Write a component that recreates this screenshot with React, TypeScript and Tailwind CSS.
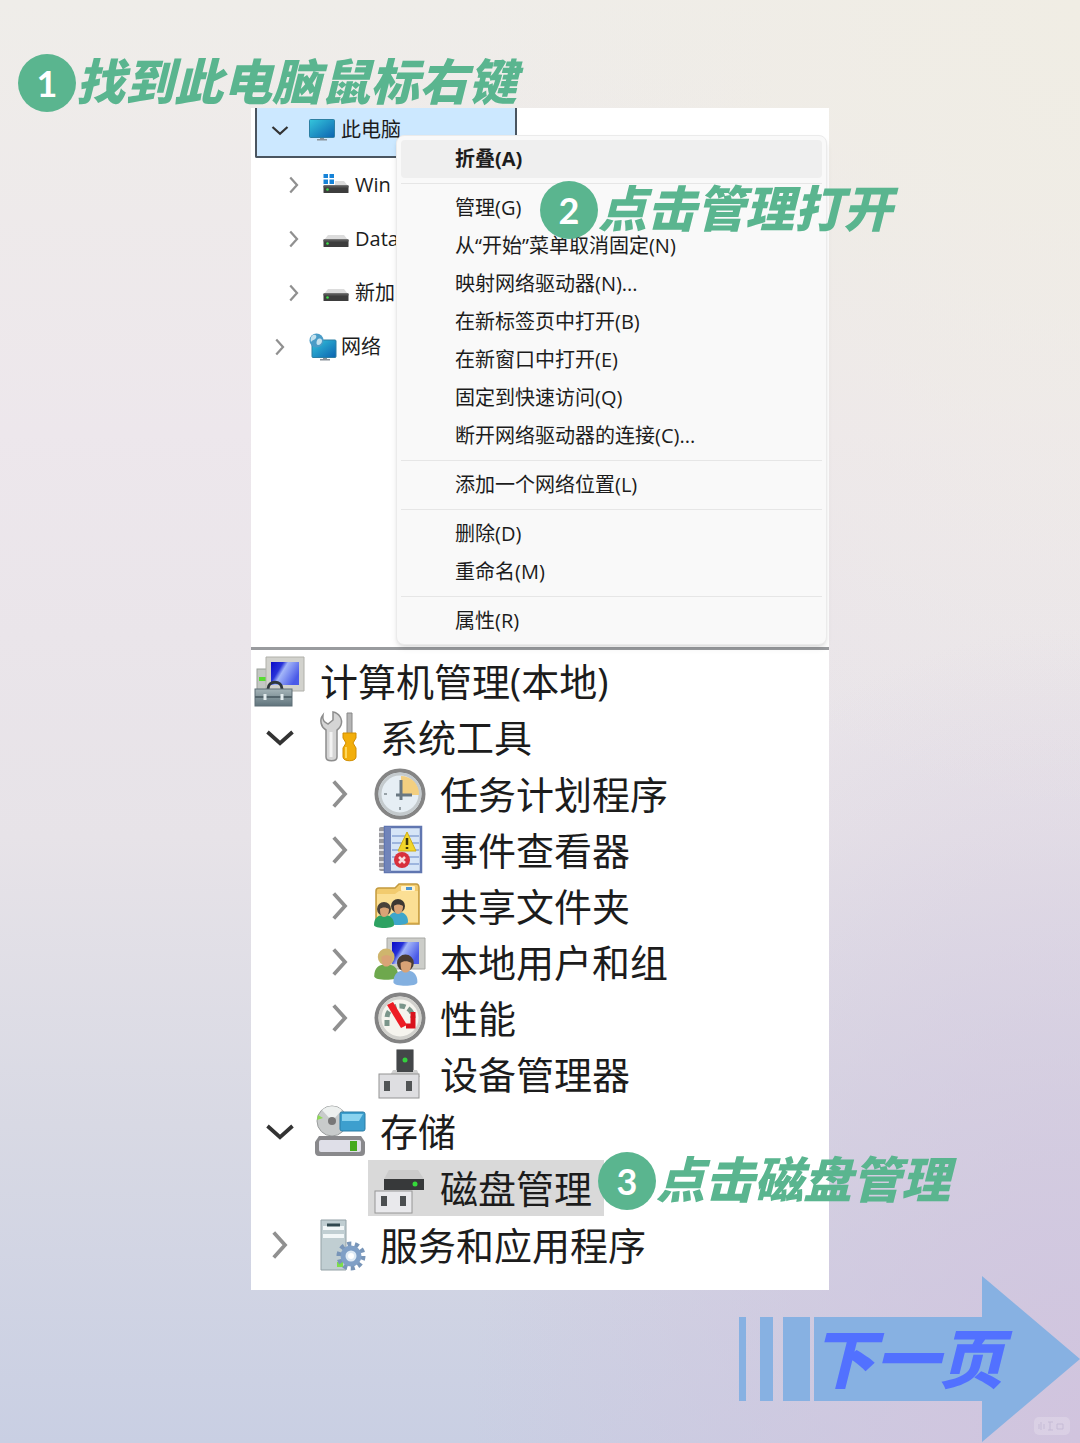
import type { ReactNode } from 'react';
import clsx from 'clsx';

type Item = {
  label: string;
  icon: ReactNode;
  open?: boolean;
  leaf?: boolean;
  selected?: boolean;
  step?: ReactNode;
  children?: Item[];
};

function Chevron({ open, size, stroke }: { open?: boolean; size: number; stroke: number }) {
  return (
    <svg width={size} height={size} viewBox="0 0 24 24" fill="none" strokeWidth={stroke}>
      {open ? (
        <path d="M2 8l10 9 10-9" stroke="#333" />
      ) : (
        <path d="M7 2l9 10-9 10" stroke="#909090" />
      )}
    </svg>
  );
}

function Step({ n, children }: { n: number; children: ReactNode }) {
  return (
    <span className="flex items-center whitespace-nowrap text-[#5ab58f]">
      <span className="flex h-[58px] w-[58px] shrink-0 items-center justify-center rounded-full bg-[#5ab58f] font-['Lato','Open_Sans',sans-serif] text-[36px] leading-[36px] font-bold text-white">
        {n}
      </span>
      <span className="pb-2 font-['Noto_Sans_CJK_SC',sans-serif] text-[49px] leading-[50px] font-black italic">
        {children}
      </span>
    </span>
  );
}

/* ---------- explorer icons ---------- */

function MonitorIcon() {
  return (
    <svg width="26" height="22" viewBox="0 0 26 22">
      <defs>
        <linearGradient id="screen" x1="0" y1="0" x2="1" y2="1">
          <stop offset="0" stopColor="#35c6dc" />
          <stop offset="1" stopColor="#0b62b0" />
        </linearGradient>
      </defs>
      <path d="M11 18h4v2h3v1.500H8V20h3z" fill="#8a9299" />
      <rect x="0.500" y="0.500" width="25" height="18" rx="1" fill="url(#screen)" stroke="#2c7fa3" />
    </svg>
  );
}

function DriveIcon({ windows }: { windows?: boolean }) {
  return (
    <svg width="26" height="22" viewBox="0 0 26 22">
      <path d="M5 7h16l4 5H1z" fill="#dcdcdc" />
      <rect x="0.500" y="11.500" width="25" height="7.500" rx="0.500" fill="#3d3d3d" />
      <rect x="0.500" y="11.500" width="25" height="2" fill="#575757" />
      <circle cx="4.500" cy="15.500" r="1.300" fill="#3fe04a" />
      {windows && (
        <g transform="translate(0 -1)">
          <rect width="12" height="12" fill="#fff" />
          <path d="M0.500 0.500h4.500v4.500h-4.500zM6.500 0.500h4.500v4.500h-4.500zM0.500 6.500h4.500v4.500h-4.500zM6.500 6.500h4.500v4.500h-4.500z" fill="#1683d8" />
        </g>
      )}
    </svg>
  );
}

function NetworkIcon() {
  return (
    <svg width="28" height="28" viewBox="0 0 28 28">
      <path d="M14 24h4v2h3v1.500H11V26h3z" fill="#8a9299" />
      <rect x="3" y="7" width="24" height="17.500" rx="1" fill="url(#screen)" stroke="#2c7fa3" />
      <circle cx="7.500" cy="7.500" r="7" fill="#4a9cc7" />
      <path d="M4 2c3-1 4 1 3 3s-4 2-5 4c-1-3 0-6 2-7zM9 6c3-1 4 0 4 2s-2 4-4 4-2-4 0-6z" fill="#c4e2ee" />
    </svg>
  );
}

/* ---------- computer management icons ---------- */

function ManagementIcon() {
  return (
    <svg width="52" height="52" viewBox="0 0 52 52">
      <defs>
        <linearGradient id="blue" x1="0" y1="0" x2="1" y2="0.500">
          <stop offset="0" stopColor="#0a0ac8" />
          <stop offset="0.350" stopColor="#2732d8" />
          <stop offset="0.500" stopColor="#a3b6f8" />
          <stop offset="1" stopColor="#4a5ae8" />
        </linearGradient>
        <linearGradient id="steel" x1="0" y1="0" x2="0" y2="1">
          <stop offset="0" stopColor="#a5b4b8" />
          <stop offset="1" stopColor="#60747c" />
        </linearGradient>
      </defs>
      <rect x="3" y="14" width="12" height="22" fill="#c3c7c3" stroke="#9aa09a" />
      <rect x="5" y="22" width="8" height="4" fill="#58dc32" />
      <path d="M12 2h38v34H12z" fill="#d2d2cd" stroke="#b0b0aa" />
      <rect x="17" y="7" width="28" height="23" fill="url(#blue)" />
      <path d="M14 34c0-9 14-9 14 0" fill="none" stroke="#2f373b" strokeWidth="3" />
      <rect x="1" y="34" width="37" height="17" fill="url(#steel)" stroke="#5e6f76" />
      <path d="M1 42h37" stroke="#54656c" strokeWidth="2" />
      <path d="M11 39v6M28 39v6" stroke="#e3ecee" strokeWidth="3" />
    </svg>
  );
}

function ToolsIcon() {
  return (
    <svg width="52" height="52" viewBox="0 0 52 52">
      <path d="M9 4c-1 6 2 7 5 9l5-4V1c6 1 10 7 8 13-1 3-3 4-4 5v27c0 5-11 5-11 0V19C7 16 5 9 9 4z" fill="#d5d5d5" stroke="#8d8d8d" strokeWidth="1.500" />
      <path d="M17 21v25" stroke="#f3f3f3" strokeWidth="3" />
      <path d="M33 2h5v21h-5z" fill="#b5b5b5" stroke="#888" />
      <path d="M29 22h13v5l-3 5 3 5v9c0 5-13 5-13 0v-9l3-5-3-5z" fill="#f2ae0b" stroke="#d08d00" />
      <path d="M32 36v11" stroke="#ffd75a" strokeWidth="2" />
    </svg>
  );
}

function ClockIcon() {
  return (
    <svg width="52" height="52" viewBox="0 0 52 52">
      <circle cx="26" cy="26" r="23.500" fill="#e6eef4" stroke="#858585" strokeWidth="4" />
      <circle cx="26" cy="26" r="20" fill="none" stroke="#c4cacd" strokeWidth="3" />
      <path d="M27 27V8a18 18 0 0 1 18 19z" fill="#f3cf80" />
      <path d="M27 12v15h11M27 27v5M22 27h5" fill="none" stroke="#6a7882" strokeWidth="3" />
      <path d="M26 42v-3M10 26h3" stroke="#98a2a8" strokeWidth="2" />
    </svg>
  );
}

function EventIcon() {
  return (
    <svg width="52" height="52" viewBox="0 0 52 52">
      <rect x="5" y="3" width="9" height="44" rx="2" fill="#9a9a9f" />
      <path d="M5 8h8M5 14h8M5 20h8M5 26h8M5 32h8M5 38h8M5 44h8" stroke="#dedee2" strokeWidth="2" />
      <rect x="11" y="3" width="36" height="45" fill="#d6e5f7" stroke="#6076b0" strokeWidth="2.500" />
      <rect x="11" y="3" width="6" height="45" fill="#7184ba" />
      <path d="M18 12h27M18 19h27M18 26h27M18 33h27M18 40h27" stroke="#8ba5d6" strokeWidth="1.500" />
      <path d="M33 8l9 19H24z" fill="#f2d62a" stroke="#d0ae16" />
      <path d="M33 14v7M33 23v2" stroke="#3c3608" strokeWidth="2.500" />
      <circle cx="28" cy="36" r="8" fill="#d8303c" />
      <path d="M25 33l6 6M31 33l-6 6" stroke="#f8dcdc" strokeWidth="2.500" />
    </svg>
  );
}

function Person({ x, y, hair, shirt }: { x: number; y: number; hair: string; shirt: string }) {
  return (
    <g transform={`translate(${x} ${y})`}>
      <path d="M0 24c0-7 4-10 10-10s10 3 10 10c0 4-20 4-20 0z" fill={shirt} />
      <circle cx="10" cy="8" r="7" fill={hair} />
      <path d="M6 8c2-2 6-2 9 0 0 5-2 8-5 8s-4-3-4-8z" fill="#d9a376" />
    </g>
  );
}

function SharedIcon() {
  return (
    <svg width="52" height="52" viewBox="0 0 52 52">
      <g transform="translate(0 3)">
        <path d="M2 8c0-2 1-3 3-3h16l4-4h17c2 0 3 2 3 4v36H2z" fill="#f2cb6e" stroke="#c39a3e" strokeWidth="1.500" />
        <path d="M3 11h18l4-3h19v31H3z" fill="#fbdf94" />
        <rect x="27" y="3" width="14" height="5" rx="1" fill="#fff3cb" />
        <rect x="32" y="4" width="6" height="3" fill="#4b95d2" />
        <Person x={14} y={15} hair="#3c3833" shirt="#3ea6cb" />
        <Person x={0} y={18} hair="#4a423a" shirt="#2da262" />
      </g>
    </svg>
  );
}

function UsersIcon() {
  return (
    <svg width="52" height="52" viewBox="0 0 52 52">
      <path d="M13 2h38v31H13z" fill="#cccdc9" stroke="#a7a8a4" />
      <rect x="18" y="6" width="27" height="22" fill="url(#blue)" />
      <g transform="translate(-1 9) scale(1.200)">
        <Person x={1} y={2} hair="#cfb56d" shirt="#6ea84d" />
        <Person x={17} y={7} hair="#4a3c32" shirt="#83b0e0" />
      </g>
    </svg>
  );
}

function GaugeIcon() {
  return (
    <svg width="52" height="52" viewBox="0 0 52 52">
      <circle cx="26" cy="26" r="23.500" fill="#f5f4ee" stroke="#838383" strokeWidth="4" />
      <circle cx="26" cy="26" r="20" fill="none" stroke="#d1d1cd" strokeWidth="3" />
      <path d="M13 34v-8c0-7 6-12 13-12s13 5 13 12" fill="none" stroke="#7a958a" strokeWidth="5" strokeDasharray="6 3" />
      <path d="M32 34h7V20" fill="none" stroke="#d9121c" strokeWidth="5" />
      <path d="M13 13l6-3 14 23-6 3z" fill="#ed1c24" />
    </svg>
  );
}

function DeviceIcon() {
  return (
    <svg width="52" height="52" viewBox="0 0 52 52">
      <rect x="23" y="2" width="16" height="26" fill="#444749" stroke="#2c2e30" />
      <circle cx="31" cy="12" r="2.500" fill="#33d13d" />
      <path d="M19 22h24l3 7H15z" fill="#cfcfcf" />
      <rect x="23" y="2" width="16" height="22" fill="#444749" />
      <circle cx="31" cy="12" r="2.500" fill="#33d13d" />
      <rect x="5" y="26" width="40" height="24" fill="#dedee1" stroke="#949494" />
      <path d="M10 33h6v10h-6zM32 33h6v10h-6z" fill="#515456" />
    </svg>
  );
}

function StorageIcon() {
  return (
    <svg width="52" height="52" viewBox="0 0 52 52">
      <circle cx="18" cy="16" r="15" fill="#c8cbcb" stroke="#9a9d9d" />
      <path d="M18 16L8 5a15 15 0 0 1 20 0z" fill="#edf0ef" />
      <path d="M9 13l-5-3-1 5z" fill="#8edb53" />
      <circle cx="18" cy="16" r="4" fill="#777" />
      <rect x="26" y="7" width="25" height="19" rx="2" fill="#3d9fce" stroke="#2b7da6" />
      <path d="M28 9h21l-4 7H28z" fill="#8ad3ef" />
      <path d="M5 31h42l4 6v10c0 3-2 4-4 4H5c-3 0-4-2-4-4V37z" fill="#89898c" />
      <rect x="5" y="35" width="42" height="12" rx="2" fill="#dfdfe8" />
      <rect x="36" y="36" width="7" height="10" fill="#45a91d" />
    </svg>
  );
}

function DiskIcon() {
  return (
    <svg width="52" height="52" viewBox="0 0 52 52">
      <path d="M15 8h29l6 9H10z" fill="#cbcbcb" />
      <rect x="10" y="17" width="40" height="11" fill="#37393a" />
      <circle cx="41" cy="22" r="2.500" fill="#35db3a" />
      <rect x="1" y="29" width="37" height="22" fill="#e9e9ec" stroke="#969696" />
      <path d="M7 34h6v10H7zM26 34h6v10h-6z" fill="#4c4f51" />
    </svg>
  );
}

function ServicesIcon() {
  return (
    <svg width="52" height="52" viewBox="0 0 52 52">
      <path d="M7 1h25v50H7z" fill="#c0ced2" stroke="#93a1a6" />
      <path d="M9 9h21M9 17h21" stroke="#f2f7f8" strokeWidth="4" />
      <path d="M13 6h13" stroke="#30484f" strokeWidth="3" />
      <rect x="23" y="43" width="6" height="5" fill="#7ddd4b" />
      <circle cx="37" cy="37" r="12" fill="none" stroke="#7895b8" strokeWidth="5" strokeDasharray="4 3.500" />
      <circle cx="37" cy="37" r="8" fill="#dfeaf4" stroke="#7f9fc6" strokeWidth="5" />
      <circle cx="37" cy="37" r="3" fill="#fff" />
    </svg>
  );
}

/* ---------- data ---------- */

const drives = [
  { label: 'Win', icon: <DriveIcon windows /> },
  { label: 'Data', icon: <DriveIcon /> },
  { label: '新加', icon: <DriveIcon /> },
];

const menuGroups: { label: string; step?: ReactNode }[][] = [
  [{ label: '折叠(A)' }],
  [
    { label: '管理(G)', step: <Step n={2}>点击管理打开</Step> },
    { label: '从“开始”菜单取消固定(N)' },
    { label: '映射网络驱动器(N)...' },
    { label: '在新标签页中打开(B)' },
    { label: '在新窗口中打开(E)' },
    { label: '固定到快速访问(Q)' },
    { label: '断开网络驱动器的连接(C)...' },
  ],
  [{ label: '添加一个网络位置(L)' }],
  [{ label: '删除(D)' }, { label: '重命名(M)' }],
  [{ label: '属性(R)' }],
];

const management: Item[] = [
  {
    label: '系统工具',
    icon: <ToolsIcon />,
    open: true,
    children: [
      { label: '任务计划程序', icon: <ClockIcon /> },
      { label: '事件查看器', icon: <EventIcon /> },
      { label: '共享文件夹', icon: <SharedIcon /> },
      { label: '本地用户和组', icon: <UsersIcon /> },
      { label: '性能', icon: <GaugeIcon /> },
      { label: '设备管理器', icon: <DeviceIcon />, leaf: true },
    ],
  },
  {
    label: '存储',
    icon: <StorageIcon />,
    open: true,
    children: [
      {
        label: '磁盘管理',
        icon: <DiskIcon />,
        leaf: true,
        selected: true,
        step: <Step n={3}>点击磁盘管理</Step>,
      },
    ],
  },
  { label: '服务和应用程序', icon: <ServicesIcon /> },
];

/* ---------- panels ---------- */

function ExplorerTree() {
  return (
    <ul className="col-start-1 row-start-1 px-1 text-[20px] leading-[24px]">
      <li>
        <div className="flex h-[50px] w-[262px] items-center rounded-b-xs border-x-2 border-b-2 border-[#4a5560] bg-[#cce8ff] pb-1 pl-[14px]">
          <button aria-label="折叠">
            <Chevron open size={18} stroke={3} />
          </button>
          <span className="ml-5 flex items-center gap-[6px]">
            <MonitorIcon />
            此电脑
          </span>
        </div>
        <ul>
          {drives.map((drive) => (
            <li key={drive.label} className="flex h-[54px] items-center pl-[30px]">
              <button aria-label="展开">
                <Chevron size={18} stroke={3} />
              </button>
              <span className="ml-5 flex items-center gap-[6px] whitespace-nowrap">
                {drive.icon}
                {drive.label}
              </span>
            </li>
          ))}
        </ul>
      </li>
      <li className="flex h-[54px] items-center pl-4">
        <button aria-label="展开">
          <Chevron size={18} stroke={3} />
        </button>
        <span className="ml-5 flex items-center gap-1">
          <NetworkIcon />
          网络
        </span>
      </li>
    </ul>
  );
}

function ContextMenu() {
  return (
    <div className="z-10 col-start-1 row-start-1 mt-[27px] mr-[2px] ml-[145px] divide-y divide-[#e6e6e6] rounded-lg border border-[#ebebeb] bg-[#f9f9f9] p-1 shadow-md">
      {menuGroups.map((group, i) => (
        <ul key={i} className="py-[5px] first:pt-0 last:pb-0">
          {group.map((item) => (
            <li key={item.label} className="relative">
              <button
                className={clsx(
                  'block h-[38px] w-full rounded-sm pl-[54px] text-left text-[20px] leading-[38px] text-[#1c1c1c]',
                  i === 0 && 'bg-[#efefef] font-bold'
                )}
              >
                {item.label}
              </button>
              {item.step && <div className="absolute -top-2 left-[139px] z-20">{item.step}</div>}
            </li>
          ))}
        </ul>
      ))}
    </div>
  );
}

function TreeNode({ item }: { item: Item }) {
  return (
    <li>
      <div className="relative flex h-[56px] items-center">
        <span className="flex w-[52px] justify-center">
          {!item.leaf && (
            <button aria-label={item.open ? '折叠' : '展开'}>
              <Chevron open={item.open} size={30} stroke={3} />
            </button>
          )}
        </span>
        <span
          className={clsx(
            'relative ml-[2px] flex h-full items-center gap-[14px] pr-3 pl-[6px] whitespace-nowrap',
            item.selected && 'bg-[#d9d9d9]'
          )}
        >
          {item.icon}
          {item.label}
          {item.step && <span className="absolute -top-2 left-[230px] z-20">{item.step}</span>}
        </span>
      </div>
      {item.children && (
        <ul className="py-px pl-[60px]">
          {item.children.map((child) => (
            <TreeNode key={child.label} item={child} />
          ))}
        </ul>
      )}
    </li>
  );
}

function NextPage() {
  return (
    <a href="#next" className="relative z-10 -mt-[14px] ml-auto block w-[341px]">
      <svg viewBox="0 0 341 166" className="block w-full" fill="#87b1e2">
        <path d="M0 41h7v84H0zM21 41h13v84H21zM44 41h27v84H44zM75 41h168V0l98 83-98 83v-41H75z" />
      </svg>
      <span className="absolute inset-y-0 left-[72px] flex items-center pb-2 font-['Noto_Sans_CJK_SC',sans-serif] text-[64px] leading-[64px] font-black text-[#5271ff] italic">
        下一页
      </span>
    </a>
  );
}

export default function App() {
  return (
    <div className="relative flex min-h-screen flex-col overflow-hidden bg-[radial-gradient(ellipse_at_100%_100%,#d1c4de_0%,transparent_40%),radial-gradient(ellipse_at_100%_0%,#f0ede4_0%,transparent_40%),linear-gradient(180deg,#efede9_0%,#ede7ec_30%,#e7e3e8_58%,#d8d9e4_78%,#c9cfe3_100%)] font-['Open_Sans','Noto_Sans_CJK_SC',sans-serif] text-[#1c1c1c]">
      <h1 className="relative z-20 mt-[54px] -mb-1 pl-[18px]">
        <Step n={1}>找到此电脑鼠标右键</Step>
      </h1>

      <main className="mx-auto w-full max-w-[578px] bg-white">
        <section className="grid border-b-[3px] border-[#999b9e] pb-[2px]">
          <ExplorerTree />
          <ContextMenu />
        </section>

        <section className="px-[3px] pt-[3px] pb-[17px] text-[38px] leading-[54px]">
          <div className="flex h-[56px] items-center gap-[14px]">
            <ManagementIcon />
            计算机管理(本地)
          </div>
          <ul>
            {management.map((item) => (
              <TreeNode key={item.label} item={item} />
            ))}
          </ul>
        </section>
      </main>

      <NextPage />
      <svg width="36" height="18" viewBox="0 0 36 18" className="absolute right-[10px] bottom-2 z-20 opacity-20">
        <rect width="36" height="18" rx="5" fill="#fff" />
        <path d="M7 5v8M5 7v5M10 7v5M14 5h5M16 5v8M14 13h5M23 7h6v5h-6z" fill="none" stroke="#9d95b8" />
      </svg>
    </div>
  );
}
